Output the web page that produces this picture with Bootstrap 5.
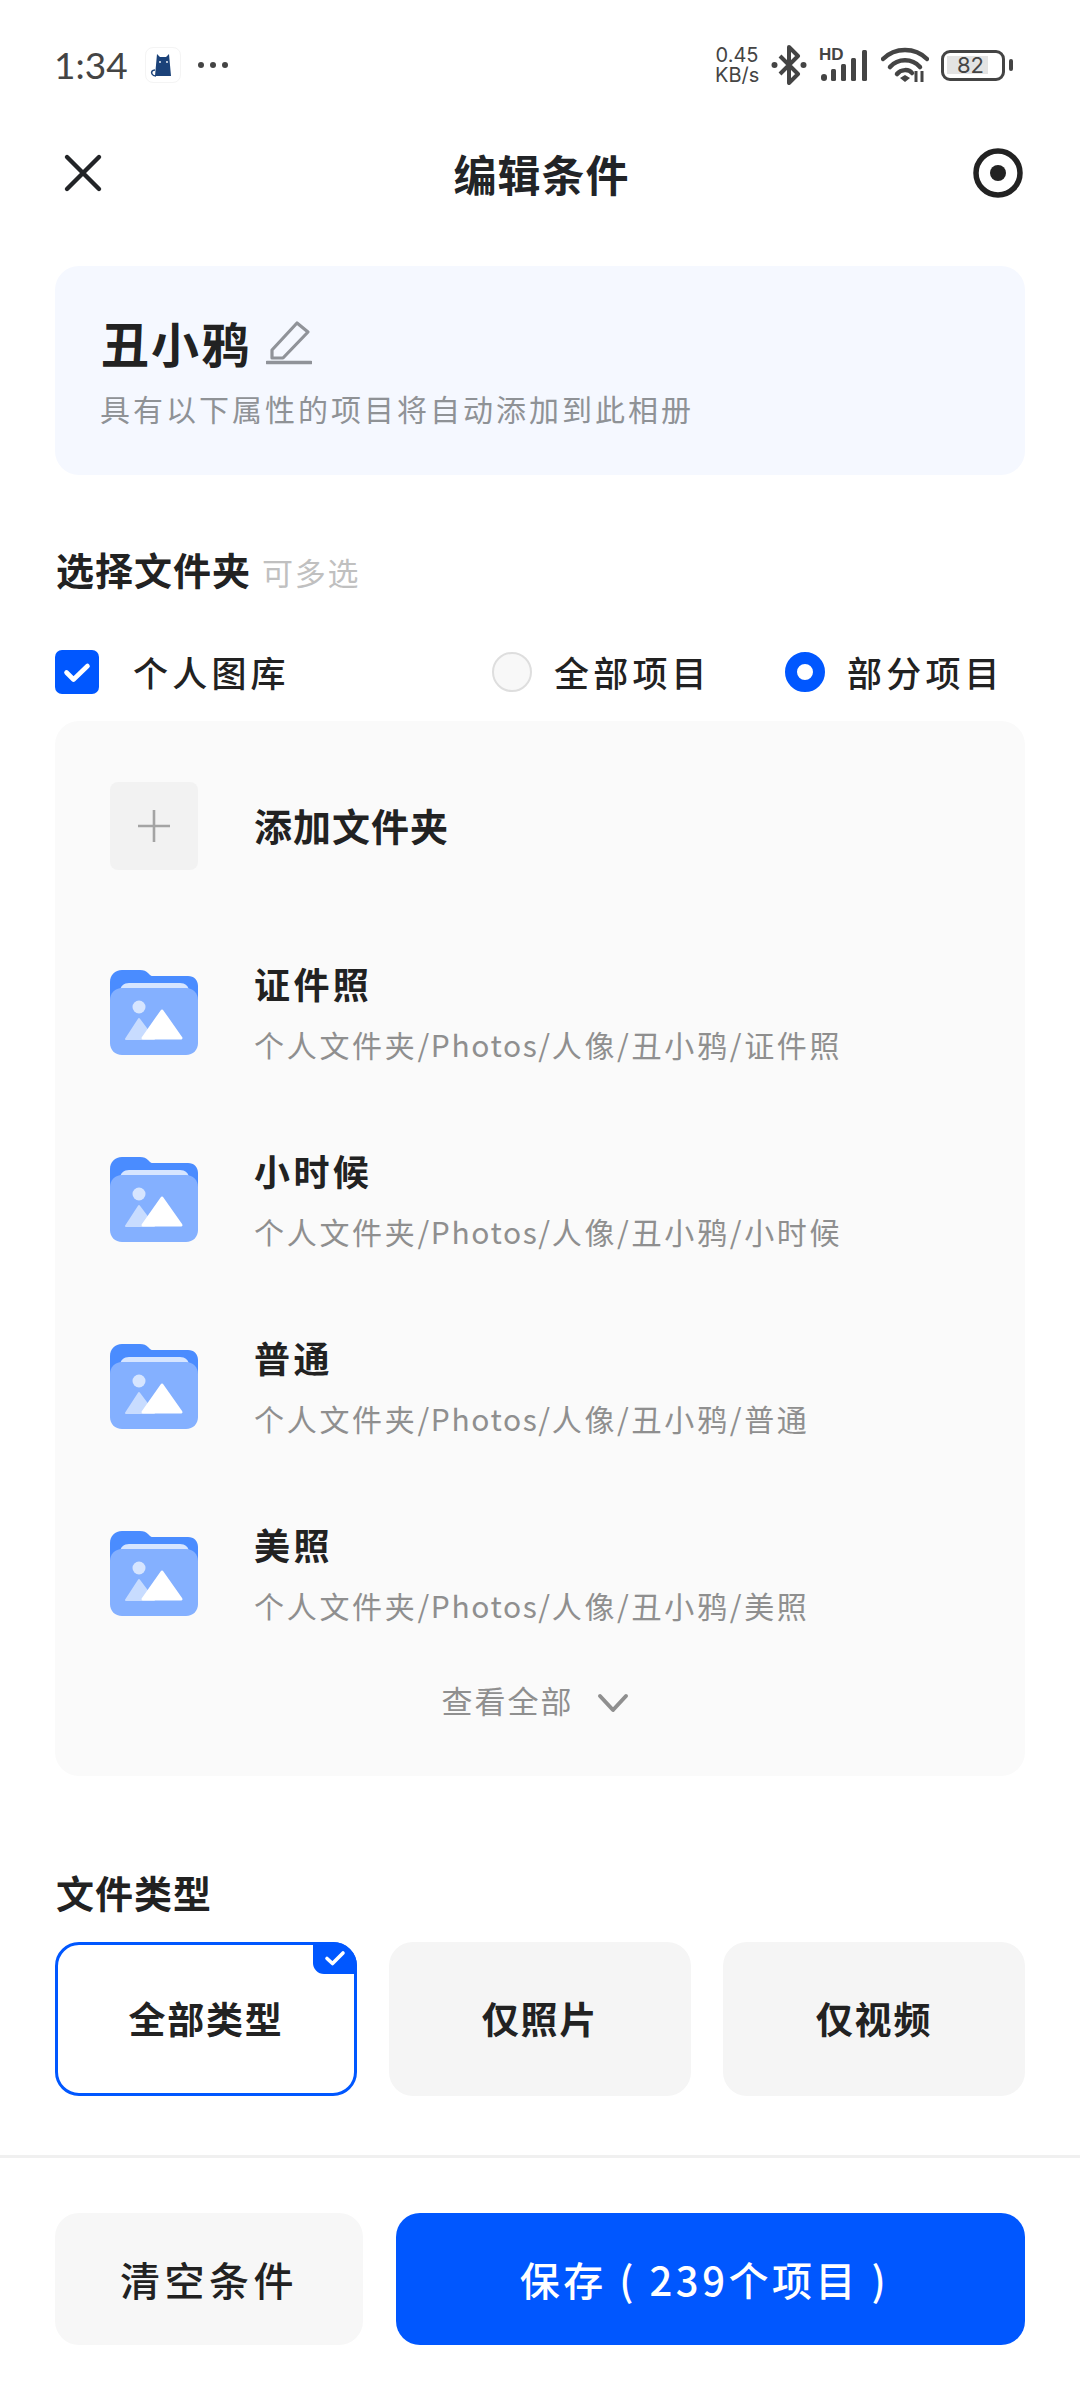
<!DOCTYPE html>
<html lang="zh-CN">
<head>
<meta charset="utf-8">
<title>编辑条件</title>
<link href="https://cdn.jsdelivr.net/npm/bootstrap@5.3.0/dist/css/bootstrap.min.css" rel="stylesheet">
<style>
:root{--blue:#0057ff;--ink:#222427;}
html,body{margin:0;background:#fff;}
body{width:1080px;height:2400px;overflow:hidden;font-family:"Noto Sans CJK SC","Noto Sans",sans-serif;color:var(--ink);}
.status-strip{height:130px;padding:0 67px 0 54px;color:#444;}
.clock{font-family:"Lato","Noto Sans",sans-serif;font-size:37px;line-height:1;width:91px;margin-top:-1px;}
.cat-tile{width:36px;height:36px;border:1px solid #f4f4f4;border-radius:8px;}
.speed{font-family:"Inter","Noto Sans",sans-serif;font-size:20px;width:44px;text-align:center;}
.speed span{display:block;line-height:20px;}
.batt-num{font-family:"Inter","Noto Sans",sans-serif;font-size:22px;font-weight:400;width:41px;height:18px;background:#e3e3e3;margin-right:11px;padding-left:6px;}
.batt-shell{width:64px;height:31px;border:3px solid #444;border-radius:9px;}
.gap-icon{margin-left:12px;}
.head-bar{height:86px;padding:0 57px 0 62px;}
.head-title{font-size:43px;font-weight:700;letter-spacing:1px;line-height:1;margin-left:6px;}
.name-card{margin:50px 55px 0;height:209px;background:#f5f8ff;border-radius:24px;padding:50px 45px 0;}
.name-line{height:52px;}
.name-text{font-size:48px;font-weight:700;letter-spacing:2px;line-height:52px;color:#222;margin-left:1px;}
.pencil-ic{margin-left:15px;}
.name-sub{font-size:30px;line-height:40px;color:#8f9296;letter-spacing:3px;margin-top:20px;}
.sec-title{font-size:38px;font-weight:700;line-height:50px;letter-spacing:1px;color:#222;}
.sec-hint{font-size:31px;color:#c0c0c0;letter-spacing:1.800px;font-weight:400;margin-left:11px;}
.sec-one{margin:69px 55px 0 56px;height:50px;}
.pick-row{margin:53px 55px 0;height:50px;font-size:35px;letter-spacing:4.200px;color:#222;font-weight:500;}
.pick-lib{margin-left:34px;width:359px;}
.pick-box{width:44px;height:44px;flex:none;margin:0;}
.radio-off,.radio-on{width:40px;height:40px;flex:none;margin:0 22px 0 0;}
.form-check-input.radio-off{background:#f8f8f8;border:2px solid #dedede;}
.form-check-input.radio-on,.form-check-input.radio-on:checked{background:#fff;border:12px solid var(--blue);}
.form-check-input.pick-box,.form-check-input.pick-box:checked{background-color:var(--blue);border:0;border-radius:7px;background-size:30px 30px;background-position:center;background-repeat:no-repeat;background-image:url("data:image/svg+xml,%3Csvg xmlns='http://www.w3.org/2000/svg' viewBox='0 0 30 30'%3E%3Cpath d='M4.5 15.5l7 7L25.5 9' fill='none' stroke='%23fff' stroke-width='4.6' stroke-linecap='round' stroke-linejoin='round'/%3E%3C/svg%3E");}
.radio-group{width:293px;}
.folder-panel{margin:24px 55px 0;height:1055px;background:#fafafa;border-radius:24px;padding:61px 55px 0;}
.add-tile{width:88px;height:88px;background:#f2f2f2;border-radius:8px;flex:none;}
.add-line{height:88px;margin-bottom:94px;}
.add-text{height:88px;margin-top:-2px;}
.folder-list{gap:87px;}
.folder-line{height:100px;}
.folder-svg{width:88px;height:85px;flex:none;margin-top:-3px;}
.text-col{margin-left:56px;}
.text-stack{height:103px;margin-top:-2px;}
.f-title{font-size:36px;font-weight:700;line-height:42px;letter-spacing:3.400px;color:#222;}
.f-sub{font-size:30px;line-height:42px;color:#8f8f8f;letter-spacing:2.700px;}
.f-path{letter-spacing:1.600px;}
.more-line{height:50px;margin-top:50px;padding-right:10px;font-size:31px;color:#8f8f8f;letter-spacing:2px;}
.chev-ic{margin-left:23px;margin-top:6px;}
.sec-two{margin:91px 55px 0 56px;height:50px;}
.kind-row{margin:25px 55px 0;height:154px;gap:32px;}
.kind-btn.btn{flex:0 0 302px;height:154px;border-radius:24px;border:0;background:#f5f5f5;color:#222;font-size:37px;font-weight:700;letter-spacing:1.800px;padding:0;}
.kind-btn.btn.kind-on{background:#fff;border:3px solid var(--blue);}
.kind-tick{top:-3px;right:-3px;width:44px;height:32px;background:var(--blue);border-radius:0 24px 0 11px;}
.rule-line{height:3px;background:#f0f0f0;margin-top:59px;}
.foot-row{margin:55px 55px 0;height:132px;gap:33px;}
.foot-clear.btn{width:308px;height:132px;background:#f7f7f7;border:0;border-radius:24px;font-size:40px;color:#222;letter-spacing:4.500px;padding:0;font-weight:500;}
.foot-save.btn{flex:1;height:132px;background:var(--blue);border:0;border-radius:24px;font-size:40px;color:#fff;letter-spacing:3.500px;padding:0 12px 0 0;font-weight:500;}
.hd-ic{overflow:visible;margin-top:-6px;}
</style>
</head>
<body>
<svg width="0" height="0" class="d-block">
  <symbol id="foldr" viewBox="0 0 88 85">
    <path d="M0 12C0 5 5 0 12 0H30c4 0 6 1 8 3l2 2c1 1 2 1 4 1H78c6 0 10 4 10 10V50H0Z" fill="#4a8cff"/>
    <path d="M10 22c0-6 4-9 9-9H70c5 0 9 3 9 9v10H10Z" fill="#d6e5ff"/>
    <path d="M0 30c0-7 5-12 12-12H76c7 0 12 5 12 12V73c0 7-5 12-12 12H12C5 85 0 80 0 73Z" fill="#84b0ff"/>
    <circle cx="29" cy="37" r="6.5" fill="#d6e5ff"/>
    <path d="M29 49L44 69H16Z" fill="#c8dcff" stroke="#c8dcff" stroke-width="2" stroke-linejoin="round"/>
    <path d="M52 41L71 68H33Z" fill="#fff" stroke="#fff" stroke-width="3" stroke-linejoin="round"/>
  </symbol>
</svg>

<div class="status-strip d-flex align-items-center">
  <span class="clock">1:34</span>
  <span class="cat-tile d-flex align-items-center justify-content-center">
    <svg width="26" height="24" viewBox="0 0 26 24"><path d="M7 1l3 3h6l3-3 2 22H5Z" fill="#1b4279"/><path d="M5 17c-3 0-4 2-3 4s3 2 4 2" fill="none" stroke="#1b4279" stroke-width="1.5"/><circle cx="10" cy="9" r=".9" fill="#fff"/><circle cx="17" cy="9" r=".9" fill="#fff"/></svg>
  </span>
  <svg class="gap-icon ms-3" width="32" height="8" viewBox="0 0 32 8"><circle cx="4" cy="4" r="3" fill="#444"/><circle cx="16" cy="4" r="3" fill="#444"/><circle cx="28" cy="4" r="3" fill="#444"/></svg>
  <div class="ms-auto d-flex align-items-center">
    <div class="speed"><span>0.45</span><span>KB/s</span></div>
    <svg class="gap-icon" width="36" height="40" viewBox="0 0 36 40"><path d="M9 11l18 18-9 9V2l9 9L9 29" fill="none" stroke="#444" stroke-width="4" stroke-linejoin="round"/><circle cx="3.5" cy="20" r="3" fill="#444"/><circle cx="32.5" cy="20" r="3" fill="#444"/></svg>
    <svg class="gap-icon hd-ic" width="50" height="40" viewBox="0 -6 50 40"><text x="0" y="12" font-family="Liberation Sans" font-weight="700" font-size="17" fill="#444">HD</text><rect x="2" y="26" width="6" height="7" rx="3" fill="#444"/><rect x="12" y="21" width="5" height="12" rx="1.5" fill="#444"/><rect x="22" y="16" width="5" height="17" rx="1.5" fill="#444"/><rect x="32" y="10" width="5" height="23" rx="1.5" fill="#444"/><rect x="43" y="2" width="5" height="31" rx="1.5" fill="#444"/></svg>
    <svg class="gap-icon" width="48" height="36" viewBox="0 0 48 36"><path d="M2 12C14 0 34 0 46 12" fill="none" stroke="#444" stroke-width="4.5" stroke-linecap="round"/><path d="M9 20C17 11 31 11 39 20" fill="none" stroke="#444" stroke-width="4.5" stroke-linecap="round"/><path d="M16 27c4-5 12-5 15-1" fill="none" stroke="#444" stroke-width="4.5" stroke-linecap="round"/><path d="M19 31l5-3 5 3-5 4Z" fill="#444"/><path d="M35 24v11M41 24v11" stroke="#444" stroke-width="3"/></svg>
    <div class="gap-icon d-flex align-items-center">
      <div class="batt-shell d-flex align-items-center justify-content-center">
        <span class="batt-num d-flex align-items-center justify-content-center">82</span>
      </div>
      <svg class="ms-1" width="4" height="12" viewBox="0 0 4 12"><rect width="4" height="12" rx="2" fill="#444"/></svg>
    </div>
  </div>
</div>

<div class="head-bar d-flex align-items-center justify-content-between">
  <svg width="42" height="42" viewBox="0 0 42 42"><path d="M5 5L37 37M37 5L5 37" stroke="#222427" stroke-width="4.4" stroke-linecap="round"/></svg>
  <span class="head-title">编辑条件</span>
  <svg width="50" height="50" viewBox="0 0 50 50"><circle cx="25" cy="25" r="22" fill="none" stroke="#222" stroke-width="5.5"/><circle cx="25" cy="25" r="8" fill="#222"/></svg>
</div>

<div class="name-card">
  <div class="name-line d-flex align-items-center">
    <span class="name-text">丑小鸦</span>
    <svg class="pencil-ic" width="46" height="46" viewBox="0 0 46 46"><path d="M6 31L31 4l11 9-25 26H6Z" fill="none" stroke="#909399" stroke-width="3.2" stroke-linejoin="round"/><path d="M1 43.500H45" stroke="#909399" stroke-width="3.400" stroke-linecap="round"/></svg>
  </div>
  <div class="name-sub">具有以下属性的项目将自动添加到此相册</div>
</div>

<div class="sec-one sec-title">选择文件夹<span class="sec-hint">可多选</span></div>

<div class="pick-row d-flex align-items-center">
  <input class="form-check-input pick-box" type="checkbox" checked aria-label="个人图库">
  <span class="pick-lib">个人图库</span>
  <div class="radio-group d-flex align-items-center">
    <input class="form-check-input radio-off" type="radio" name="scope" aria-label="全部项目">
    <span>全部项目</span>
  </div>
  <div class="d-flex align-items-center">
    <input class="form-check-input radio-on" type="radio" name="scope" checked aria-label="部分项目">
    <span>部分项目</span>
  </div>
</div>

<div class="folder-panel">
  <div class="add-line d-flex align-items-center">
    <div class="add-tile d-flex align-items-center justify-content-center">
      <svg width="34" height="34" viewBox="0 0 34 34"><path d="M17 1V33M1 17H33" stroke="#a4a4a4" stroke-width="2.600"/></svg>
    </div>
    <span class="sec-title text-col add-text d-flex align-items-center">添加文件夹</span>
  </div>

  <div class="folder-list d-flex flex-column">
    <div class="folder-line d-flex align-items-center">
      <svg class="folder-svg"><use href="#foldr"/></svg>
      <div class="text-col text-stack d-flex flex-column justify-content-between">
        <span class="f-title">证件照</span>
        <span class="f-sub">个人文件夹<span class="f-path">/Photos/</span>人像/丑小鸦/证件照</span>
      </div>
    </div>
    <div class="folder-line d-flex align-items-center">
      <svg class="folder-svg"><use href="#foldr"/></svg>
      <div class="text-col text-stack d-flex flex-column justify-content-between">
        <span class="f-title">小时候</span>
        <span class="f-sub">个人文件夹<span class="f-path">/Photos/</span>人像/丑小鸦/小时候</span>
      </div>
    </div>
    <div class="folder-line d-flex align-items-center">
      <svg class="folder-svg"><use href="#foldr"/></svg>
      <div class="text-col text-stack d-flex flex-column justify-content-between">
        <span class="f-title">普通</span>
        <span class="f-sub">个人文件夹<span class="f-path">/Photos/</span>人像/丑小鸦/普通</span>
      </div>
    </div>
    <div class="folder-line d-flex align-items-center">
      <svg class="folder-svg"><use href="#foldr"/></svg>
      <div class="text-col text-stack d-flex flex-column justify-content-between">
        <span class="f-title">美照</span>
        <span class="f-sub">个人文件夹<span class="f-path">/Photos/</span>人像/丑小鸦/美照</span>
      </div>
    </div>
  </div>

  <div class="more-line d-flex align-items-center justify-content-center">
    <span>查看全部</span>
    <svg class="chev-ic" width="32" height="20" viewBox="0 0 32 20"><path d="M3 3L16 17L29 3" fill="none" stroke="#8f8f8f" stroke-width="4" stroke-linecap="round" stroke-linejoin="round"/></svg>
  </div>
</div>

<div class="sec-two sec-title">文件类型</div>

<div class="kind-row d-flex">
  <button class="btn kind-btn kind-on position-relative" type="button">全部类型
    <span class="kind-tick position-absolute d-flex align-items-center justify-content-center">
      <svg width="22" height="18" viewBox="0 0 22 18"><path d="M3 9.500l5.500 5L19 4" fill="none" stroke="#fff" stroke-width="3.600" stroke-linecap="round" stroke-linejoin="round"/></svg>
    </span>
  </button>
  <button class="btn kind-btn" type="button">仅照片</button>
  <button class="btn kind-btn" type="button">仅视频</button>
</div>

<div class="rule-line"></div>

<div class="foot-row d-flex">
  <button class="btn foot-clear" type="button">清空条件</button>
  <button class="btn foot-save" type="button">保存 ( 239个项目 )</button>
</div>

<script src="https://cdn.jsdelivr.net/npm/bootstrap@5.3.0/dist/js/bootstrap.bundle.min.js"></script>
</body>
</html>
